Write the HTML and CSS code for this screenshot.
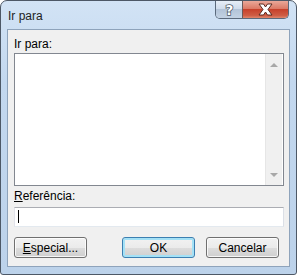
FILE: index.html
```html
<!DOCTYPE html>
<html lang="pt">
<head>
    <meta charset="UTF-8">
    <title>Ir para</title>
    <link rel="stylesheet" href="styles.css">
</head>
<body>
    <div class="window">
        <div class="titlebar">
            <span class="title">Ir para</span>
            <div class="caption-buttons">
                <div class="cap-btn help">
                    <svg width="27" height="17" viewBox="0 0 27 17">
                        <text x="14" y="14" text-anchor="middle" class="help-glyph">?</text>
                    </svg>
                </div>
                <div class="cap-btn close">
                    <svg width="45" height="17" viewBox="0 0 45 17">
                        <path d="M16 3 L20.5 3 L22.5 6 L24.5 3 L29 3 L25 8.5 L29 14 L24.5 14 L22.5 11 L20.5 14 L16 14 L20 8.5 Z" class="close-glyph"/>
                    </svg>
                </div>
            </div>
        </div>

        <div class="client">
            <div class="field-label">Ir para:</div>
            <div class="listbox">
                <div class="list-area"></div>
                <div class="scrollbar">
                    <span class="arrow up"></span>
                    <span class="arrow down"></span>
                </div>
            </div>

            <div class="field-label ref"><u>R</u>eferência:</div>
            <div class="textbox"><span class="caret"></span></div>

            <div class="buttons">
                <button class="btn"><u>E</u>special...</button>
                <button class="btn default">OK</button>
                <button class="btn">Cancelar</button>
            </div>
        </div>
    </div>
</body>
</html>
```

FILE: styles.css
```css
* {
    margin: 0;
    padding: 0;
    box-sizing: border-box;
}

body {
    font-family: 'Segoe UI', 'Liberation Sans', Arial, sans-serif;
    font-size: 12px;
    color: #000;
    background: #fff;
}

.window {
    width: 297px;
    height: 275px;
    border: 1px solid #4d5866;
    border-radius: 7px 7px 3px 3px;
    background: linear-gradient(to bottom, #d2e3f5 0%, #c3d8ef 30%, #bcd2ea 100%);
    display: flex;
    flex-direction: column;
    overflow: hidden;
}

.titlebar {
    height: 28px;
    display: flex;
    align-items: flex-start;
    padding: 0 7px;
}

.title {
    padding-top: 8px;
    line-height: 15px;
    color: #1e1e1e;
}

.caption-buttons {
    margin-left: auto;
    display: flex;
    height: 18px;
    border: 1px solid #5b6a7c;
    border-top: none;
    border-radius: 0 0 5px 5px;
    overflow: hidden;
}

.cap-btn {
    height: 17px;
    display: flex;
}

.help {
    width: 27px;
    background: linear-gradient(to bottom, #e6eef7 0%, #d0dceb 45%, #b3c4d8 50%, #c3d2e3 100%);
    border-right: 1px solid #6b5a5a;
}

.close {
    width: 45px;
    background: linear-gradient(to bottom, #eaa899 0%, #db7a66 45%, #c7412b 50%, #cf5d45 85%, #e0866c 100%);
}

.help-glyph {
    font: bold 14px 'DejaVu Sans', sans-serif;
    fill: #fff;
    stroke: #4f5a68;
    stroke-width: 1.6px;
    paint-order: stroke;
}

.close-glyph {
    fill: #fff;
    stroke: #5a2a20;
    stroke-width: 1px;
}

.client {
    flex: 1;
    margin: 0 6px 7px;
    background: #f0f0f0;
    border: 1px solid #8ea3bb;
    padding: 0 5px 0 6px;
    display: flex;
    flex-direction: column;
}

.field-label {
    margin-top: 7px;
    line-height: 15px;
}

.field-label.ref {
    margin-top: 3px;
}

.listbox {
    margin-top: 1px;
    height: 133px;
    border: 1px solid #828790;
    background: #fff;
    display: flex;
}

.list-area {
    flex: 1;
}

.scrollbar {
    width: 17px;
    margin-right: 1px;
    background: #f0f0f0;
    border-left: 1px solid #e6e6e6;
    display: flex;
    flex-direction: column;
    justify-content: space-between;
    align-items: center;
    padding: 9px 0 8px;
}

.arrow {
    width: 0;
    height: 0;
    border-left: 4px solid transparent;
    border-right: 4px solid transparent;
}

.arrow.up {
    border-bottom: 4px solid #a8a8a8;
}

.arrow.down {
    border-top: 4px solid #a8a8a8;
}

.textbox {
    margin-top: 3px;
    height: 20px;
    border: 1px solid #abadb3;
    border-color: #abadb3 #dbdfe6 #e3e9ef #e2e3ea;
    background: #fff;
    padding: 2px 3px;
}

.caret {
    display: block;
    width: 1px;
    height: 13px;
    background: #000;
}

.buttons {
    margin-top: 10px;
    display: flex;
    gap: 11px;
    padding-right: 5px;
}

.btn {
    width: 73px;
    height: 21px;
    font: inherit;
    color: #000;
    border: 1px solid #707070;
    border-radius: 3px;
    background: linear-gradient(to bottom, #f2f2f2 0%, #ebebeb 50%, #dddddd 51%, #cfcfcf 100%);
    box-shadow: inset 0 0 0 1px rgba(255, 255, 255, 0.8);
}

.btn:first-child {
    margin-right: auto;
}

.btn.default {
    border-color: #3c7fb1;
    box-shadow: inset 0 0 0 2px #a4e1f6;
}
```
